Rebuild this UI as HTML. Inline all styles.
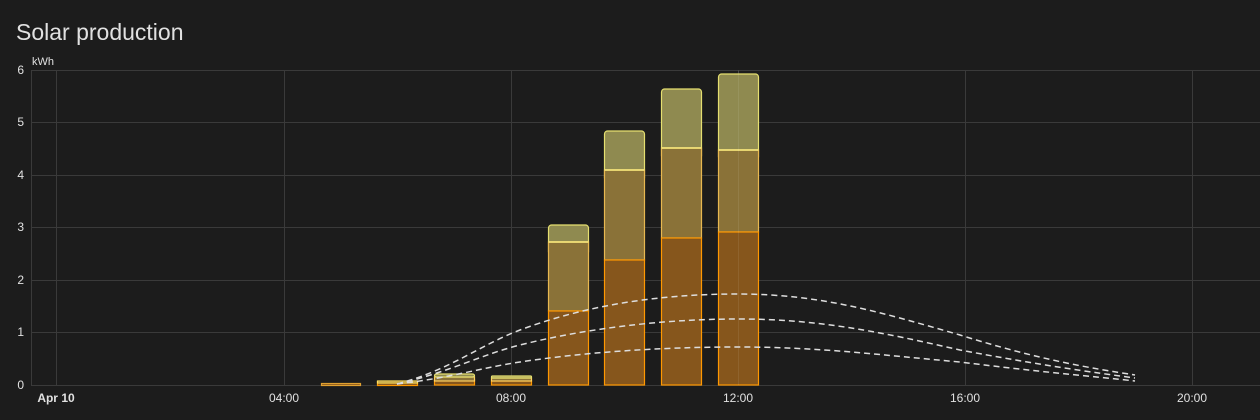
<!DOCTYPE html>
<html><head><style>
html,body{margin:0;padding:0;background:#1c1c1c;}
body{width:1260px;height:420px;overflow:hidden;font-family:"Liberation Sans",sans-serif;}
</style></head><body>
<svg width="1260" height="420" xmlns="http://www.w3.org/2000/svg" style="display:block">
<rect width="1260" height="420" fill="#1c1c1c"/>
<text x="16" y="40" fill="#e1e1e1" font-size="23" font-family="Liberation Sans, sans-serif">Solar production</text>
<text x="32" y="65" fill="#e1e1e1" font-size="11">kWh</text>
<g stroke="#3a3a3a" stroke-width="1">
<line x1="31" y1="70.5" x2="1260" y2="70.5"/>
<line x1="31" y1="122.5" x2="1260" y2="122.5"/>
<line x1="31" y1="175.5" x2="1260" y2="175.5"/>
<line x1="31" y1="227.5" x2="1260" y2="227.5"/>
<line x1="31" y1="280.5" x2="1260" y2="280.5"/>
<line x1="31" y1="332.5" x2="1260" y2="332.5"/>
<line x1="31" y1="385.5" x2="1260" y2="385.5"/>
<line x1="31.5" y1="70" x2="31.5" y2="385"/>
<line x1="56.5" y1="70" x2="56.5" y2="385"/>
<line x1="284.5" y1="70" x2="284.5" y2="385"/>
<line x1="511.5" y1="70" x2="511.5" y2="385"/>
<line x1="738.5" y1="70" x2="738.5" y2="385"/>
<line x1="965.5" y1="70" x2="965.5" y2="385"/>
<line x1="1192.5" y1="70" x2="1192.5" y2="385"/>
</g>
<g fill="#e1e1e1" font-size="12" text-anchor="end">
<text x="24" y="74">6</text><text x="24" y="126">5</text><text x="24" y="179">4</text>
<text x="24" y="231">3</text><text x="24" y="284">2</text><text x="24" y="336">1</text><text x="24" y="389">0</text>
</g>
<g fill="#e1e1e1" font-size="12" text-anchor="middle">
<text x="56" y="402" font-weight="bold">Apr 10</text>
<text x="284" y="402">04:00</text><text x="511" y="402">08:00</text><text x="738" y="402">12:00</text>
<text x="965" y="402">16:00</text><text x="1192" y="402">20:00</text>
</g>
<!-- bars -->
<g stroke-width="1.2">
<!-- small -->
<rect x="321.5" y="383.5" width="39" height="2" fill="#86561c" stroke="#e0a030"/>
<rect x="377.5" y="381.5" width="40" height="4" fill="#86561c" stroke="#ff9800"/>
<rect x="377.5" y="381" width="40" height="2" fill="#8a7238" stroke="#ffe060"/>
<rect x="434.5" y="380" width="40" height="5" fill="#86561c" stroke="#ff9800"/>
<rect x="434.5" y="377" width="40" height="4" fill="#8a7238" stroke="#ffd060"/>
<rect x="434.5" y="374" width="40" height="3" fill="#8f8a50" stroke="#e6e070" rx="2"/>
<rect x="491.5" y="381" width="40" height="4" fill="#86561c" stroke="#ff9800"/>
<rect x="491.5" y="378" width="40" height="3" fill="#8a7238" stroke="#ffd060"/>
<rect x="491.5" y="376" width="40" height="2" fill="#8f8a50" stroke="#e6e070" rx="1"/>
<!-- 09 -->
<rect x="548.5" y="225" width="40" height="30" fill="#8f8a50" stroke="#e6e070" rx="3"/>
<rect x="548.5" y="242" width="40" height="69" fill="#8a7238" stroke="#e8b850"/>
<rect x="548.5" y="311" width="40" height="74" fill="#86561c" stroke="#ff9800"/>
<line x1="548.5" y1="242" x2="588.5" y2="242" stroke="#fff080" stroke-width="1.5"/>
<!-- 10 -->
<rect x="604.5" y="131" width="40" height="50" fill="#8f8a50" stroke="#e6e070" rx="3"/>
<rect x="604.5" y="170" width="40" height="90" fill="#8a7238" stroke="#e8b850"/>
<rect x="604.5" y="260" width="40" height="125" fill="#86561c" stroke="#ff9800"/>
<line x1="604.5" y1="170" x2="644.5" y2="170" stroke="#fff080" stroke-width="1.5"/>
<!-- 11 -->
<rect x="661.5" y="89" width="40" height="70" fill="#8f8a50" stroke="#e6e070" rx="3"/>
<rect x="661.5" y="148" width="40" height="90" fill="#8a7238" stroke="#e8b850"/>
<rect x="661.5" y="238" width="40" height="147" fill="#86561c" stroke="#ff9800"/>
<line x1="661.5" y1="148" x2="701.5" y2="148" stroke="#fff080" stroke-width="1.5"/>
<!-- 12 -->
<rect x="718.5" y="74" width="40" height="86" fill="#8f8a50" stroke="#e6e070" rx="3"/>
<rect x="718.5" y="150" width="40" height="82" fill="#8a7238" stroke="#e8b850"/>
<rect x="718.5" y="232" width="40" height="153" fill="#86561c" stroke="#ff9800"/>
<line x1="718.5" y1="150" x2="758.5" y2="150" stroke="#fff080" stroke-width="1.5"/>
</g>
<line x1="738.5" y1="70" x2="738.5" y2="385" stroke="#ffffff" stroke-opacity="0.08"/>
<!-- forecast dashed -->
<g fill="none" stroke="#dddddd" stroke-width="1.5" stroke-dasharray="6,4">
<path d="M397,384 C450,370 480,345 520,330 C600,300 680,294 738,294 C820,294 880,312 960,335 C1040,360 1090,368 1135,375"/>
<path d="M397,384 C450,372 480,355 520,345 C600,325 680,319 738,319 C820,319 880,332 960,350 C1040,365 1090,372 1135,378"/>
<path d="M397,384 C450,378 480,368 520,362 C600,350 680,347 738,347 C820,347 880,355 960,362 C1040,372 1090,376 1135,381"/>
</g>
</svg>
</body></html>
